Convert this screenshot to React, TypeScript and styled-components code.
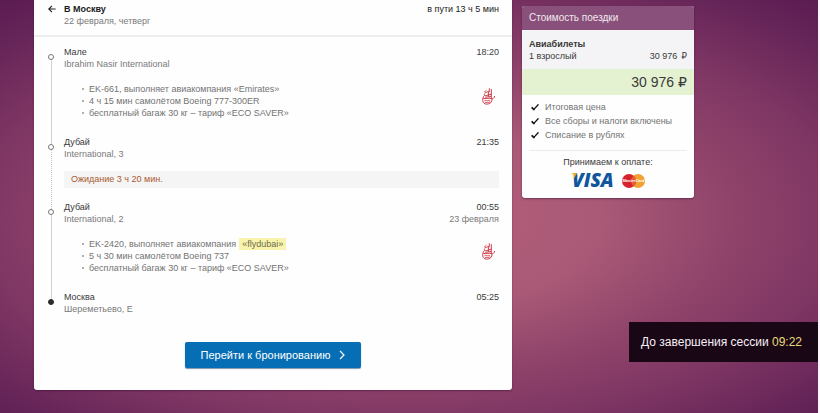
import React from "react";
import styled, { createGlobalStyle, css } from "styled-components";

const GlobalStyle = createGlobalStyle`
  *, *::before, *::after { box-sizing: border-box; }
  body {
    margin: 0;
    background: #fbf7fa;
    font: 9px/12px "Liberation Sans", Arial, sans-serif;
    color: #3a3a3a;
  }
  ul, ol, h1, h2, h3, p { margin: 0; padding: 0; list-style: none; font-size: inherit; font-weight: inherit; }
`;

const Page = styled.div`
  min-height: 100vh;
  margin-right: 2px;
  padding: 0 124px 23px 34px;
  background: radial-gradient(ellipse 74% 70% at 50% 53%, #b5607b 0%, #a95976 32%, #8f436a 54%, #7d3563 72%, #662558 90%, #55174f 108%);
  display: grid;
  grid-template-columns: minmax(0, 1fr) 172px;
  gap: 10px;
  align-items: start;
`;

const TripCard = styled.main`
  background: #fefefe;
  border-radius: 0 0 3px 3px;
  box-shadow: 0 1px 2px rgba(40, 0, 40, 0.4);
  padding-bottom: 22px;
`;

const TripHeader = styled.header`
  display: grid;
  grid-template-columns: 8px 1fr auto;
  column-gap: 8px;
  padding: 3px 13px 8px 14px;
  border-bottom: 2px solid #ededee;
`;

const BackButton = styled.button`
  display: flex;
  align-items: center;
  height: 12px;
  padding: 0;
  border: 0;
  background: none;
  color: #222;
  cursor: pointer;
`;

const Direction = styled.h1`
  font-weight: 700;
  color: #1c1c1c;
`;

const Muted = styled.p`
  color: #7a7a7a;
`;

const Duration = styled.p`
  color: #222;
`;

const Route = styled.ol`
  padding: 9px 13px 0 14px;
`;

const Segment = styled.li`
  display: grid;
  grid-template-columns: 6px minmax(0, 1fr);
  column-gap: 10px;
`;

const Rail = styled.div`
  display: flex;
  flex-direction: column;
  align-items: center;
  margin: 8px 0 -8px;
`;

const Dot = styled.span<{ $filled?: boolean }>`
  width: 6px;
  height: 6px;
  border: 1px solid ${(p) => (p.$filled ? "#2b2b2b" : "#777")};
  border-radius: 50%;
  background: ${(p) => (p.$filled ? "#2b2b2b" : "#fff")};
`;

const Line = styled.span<{ $dotted?: boolean }>`
  flex: 1;
  border-left: ${(p) => (p.$dotted ? "1px dotted #c4c4c4" : "1px solid #d2d2d2")};
`;

const Stop = styled.div`
  display: flex;
  justify-content: space-between;
  min-height: 24px;
`;

const StopTime = styled.div`
  text-align: right;
`;

const Flight = styled.div`
  display: flex;
  justify-content: space-between;
  align-items: flex-start;
  padding: 13px 4px 17px 18px;
`;

const Carrier = styled.div`
  display: flex;
  padding-top: 5px;
`;

const Details = styled.ul`
  color: #737373;
`;

const Detail = styled.li`
  display: flex;
  align-items: center;
  &::before {
    content: "";
    width: 2px;
    height: 2px;
    margin-right: 5px;
    background: #b0b0b0;
  }
`;

const Mark = styled.mark`
  margin-left: 3px;
  padding: 0 3px;
  background: #faf3ab;
  color: #6b6b4c;
`;

const Waiting = styled.p`
  margin: 11px 0 13px;
  padding: 0 7px;
  line-height: 17px;
  background: #f5f5f5;
  color: #a9592f;
`;

const BookButton = styled.button`
  display: flex;
  align-items: center;
  gap: 9px;
  height: 26px;
  margin: 27px auto 0;
  padding: 0 16px;
  border: 0;
  border-radius: 2px;
  background: #066eb4;
  box-shadow: 0 1px 1px rgba(0, 40, 80, 0.5);
  color: #fff;
  font: 11px/16px "Liberation Sans", Arial, sans-serif;
  cursor: pointer;
`;

const PriceCard = styled.aside`
  margin-top: 6px;
  border-radius: 3px;
  overflow: hidden;
  background: #fefefe;
  box-shadow: 0 1px 2px rgba(40, 0, 40, 0.45);
`;

const PriceTitle = styled.h2`
  padding: 0 7px;
  font-size: 10px;
  line-height: 24px;
  background: #88507a;
  color: #f3e8f0;
`;

const Fare = styled.section`
  padding: 8px 7px 7px;
  background: #f4f4f6;
`;

const FareName = styled.h3`
  font-weight: 700;
`;

const amount = css`
  display: flex;
  align-items: center;
`;

const FareRow = styled.p`
  ${amount}
  justify-content: space-between;
`;

const Sum = styled.span`
  ${amount}
  gap: 4px;
`;

const Ruble = styled.span`
  font-family: "DejaVu Sans", sans-serif;
`;

const Total = styled.p`
  ${amount}
  justify-content: flex-end;
  padding: 0 7px;
  font-size: 14px;
  line-height: 26px;
  background: #e4f2d1;
`;

const Perks = styled.ul`
  margin: 0 7px;
  padding: 5px 0 8px 2px;
  border-bottom: 1px solid #ececec;
  color: #737373;
  line-height: 14px;
`;

const Perk = styled.li`
  display: flex;
  align-items: center;
  gap: 6px;
`;

const Payment = styled.footer`
  padding: 5px 7px 10px;
  text-align: center;
`;

const Brands = styled.div`
  display: flex;
  justify-content: center;
  align-items: center;
  gap: 7px;
  margin-top: 5px;
`;

const Session = styled.div`
  position: fixed;
  right: 2px;
  bottom: 51px;
  padding: 12px 16px 12px 12px;
  background: #1a0716;
  color: #f4eff3;
  font-size: 12px;
  line-height: 16px;
`;

const Countdown = styled.time`
  color: #e6dc7c;
`;

const ArrowLeft = () => (
  <svg width="8" height="8" viewBox="0 0 8 8" fill="none" stroke="currentColor" strokeWidth="1.1" aria-hidden="true">
    <path d="M7.6 4H.9M4 .8L.8 4L4 7.2" />
  </svg>
);

const ChevronRight = () => (
  <svg width="6" height="10" viewBox="0 0 6 10" fill="none" stroke="currentColor" strokeWidth="1.2" aria-hidden="true">
    <path d="M1 1l4 4-4 4" />
  </svg>
);

const Tick = () => (
  <svg width="8" height="8" viewBox="0 0 8 8" fill="none" stroke="#151515" strokeLinecap="round" aria-hidden="true">
    <path d="M1.2 4.8L2.8 6.5" strokeWidth="1.8" />
    <path d="M2.9 6.4L7.1 1.7" strokeWidth="1.3" />
  </svg>
);

const EmiratesLogo = () => (
  <svg width="13" height="17" viewBox="0 0 13 17" fill="none" stroke="#cf3a46" strokeWidth="1" strokeLinecap="round" role="img" aria-label="Emirates">
    <path d="M7.3.7v2M9.300 1.500v9M4 2.400C2.200 3.600 2.400 5 4.200 4.400C5.400 3.900 6.400 3 7.500 3.600M6.400 4.400v4" />
    <path d="M2.600 5.800C1.600 7.400 2.400 8.200 4.200 7.600L9.200 6.200M3.600 9.200L8.600 8.600" />
    <path d="M12.600 8.400C12 10.600 10.800 11 9.300 10.500C6.600 9.700 3.800 11.200 1.600 10.400" />
    <path d="M1.500 8.600C-.2 12 .6 16 4.400 16.100C8 16.200 10.300 14.200 9.900 11.400" />
    <path d="M2.800 12.500C4 11.600 4.600 13.500 5.800 12.700C6.600 12.200 7.400 12 7.900 12.700M3.200 14.300C4.800 15 6.600 14.600 7.800 13.900" strokeWidth=".9" />
  </svg>
);

const VisaLogo = () => (
  <svg width="44" height="15" viewBox="0 0 44 15" overflow="visible" role="img" aria-label="Visa">
    <defs>
      <linearGradient id="visa" gradientUnits="userSpaceOnUse" x1="1" y1="1" x2="6" y2="4">
        <stop offset=".55" stopColor="#e9a632" />
        <stop offset=".8" stopColor="#12559b" />
      </linearGradient>
    </defs>
    <path d="M.2 .6h5.400l1.600 3.600C5.600 2.400 3.200 1.300.200 1z" fill="#e9a632" />
    <text x="1" y="14" fontFamily="Open Sans, sans-serif" fontSize="19" fontWeight="800" fontStyle="italic" fill="url(#visa)">VISA</text>
  </svg>
);

const MasterCardLogo = () => (
  <svg width="23" height="14" viewBox="0 0 23 14" role="img" aria-label="MasterCard">
    <circle cx="16" cy="7" r="7" fill="#f2a233" />
    <circle cx="7" cy="7" r="7" fill="#d8232e" />
    <path d="M11.500 1.640a7 7 0 0 1 0 10.720a7 7 0 0 1 0-10.720" fill="#e4622f" />
    <text x="11.500" y="8.400" textAnchor="middle" fontFamily="Liberation Sans, sans-serif" fontSize="4" fontWeight="700" fontStyle="italic" fill="#fff">MasterCard</text>
  </svg>
);

type StopData = {
  city: string;
  airport: string;
  time: string;
  date?: string;
  flight?: React.ReactNode[];
  waiting?: string;
};

const stops: StopData[] = [
  {
    city: "Мале",
    airport: "Ibrahim Nasir International",
    time: "18:20",
    flight: [
      "EK-661, выполняет авиакомпания «Emirates»",
      "4 ч 15 мин самолётом Boeing 777-300ER",
      "бесплатный багаж 30 кг – тариф «ECO SAVER»",
    ],
  },
  { city: "Дубай", airport: "International, 3", time: "21:35", waiting: "Ожидание 3 ч 20 мин." },
  {
    city: "Дубай",
    airport: "International, 2",
    time: "00:55",
    date: "23 февраля",
    flight: [
      <>EK-2420, выполняет авиакомпания<Mark>«flydubai»</Mark></>,
      "5 ч 30 мин самолётом Boeing 737",
      "бесплатный багаж 30 кг – тариф «ECO SAVER»",
    ],
  },
  { city: "Москва", airport: "Шереметьево, E", time: "05:25" },
];

const perks = ["Итоговая цена", "Все сборы и налоги включены", "Списание в рублях"];

export default function App() {
  return (
    <>
      <GlobalStyle />
      <Page>
        <TripCard>
          <TripHeader>
            <BackButton type="button" aria-label="Назад"><ArrowLeft /></BackButton>
            <div>
              <Direction>В Москву</Direction>
              <Muted>22 февраля, четверг</Muted>
            </div>
            <Duration>в пути 13 ч 5 мин</Duration>
          </TripHeader>
          <Route>
            {stops.map((s, i) => {
              const last = i === stops.length - 1;
              return (
                <Segment key={s.time}>
                  <Rail>
                    <Dot $filled={last} />
                    {!last && <Line $dotted={!!s.waiting} />}
                  </Rail>
                  <div>
                    <Stop>
                      <div>
                        <p>{s.city}</p>
                        <Muted>{s.airport}</Muted>
                      </div>
                      <StopTime>
                        <p>{s.time}</p>
                        {s.date && <Muted>{s.date}</Muted>}
                      </StopTime>
                    </Stop>
                    {s.flight && (
                      <Flight>
                        <Details>
                          {s.flight.map((d, n) => <Detail key={n}>{d}</Detail>)}
                        </Details>
                        <Carrier><EmiratesLogo /></Carrier>
                      </Flight>
                    )}
                    {s.waiting && <Waiting>{s.waiting}</Waiting>}
                  </div>
                </Segment>
              );
            })}
          </Route>
          <BookButton type="button">Перейти к бронированию <ChevronRight /></BookButton>
        </TripCard>
        <PriceCard>
          <PriceTitle>Стоимость поездки</PriceTitle>
          <Fare>
            <FareName>Авиабилеты</FareName>
            <FareRow>
              <span>1 взрослый</span>
              <Sum>30 976 <Ruble>₽</Ruble></Sum>
            </FareRow>
          </Fare>
          <Total><Sum>30 976 <Ruble>₽</Ruble></Sum></Total>
          <Perks>
            {perks.map((p) => <Perk key={p}><Tick />{p}</Perk>)}
          </Perks>
          <Payment>
            <p>Принимаем к оплате:</p>
            <Brands><VisaLogo /><MasterCardLogo /></Brands>
          </Payment>
        </PriceCard>
        <Session>До завершения сессии <Countdown>09:22</Countdown></Session>
      </Page>
    </>
  );
}
